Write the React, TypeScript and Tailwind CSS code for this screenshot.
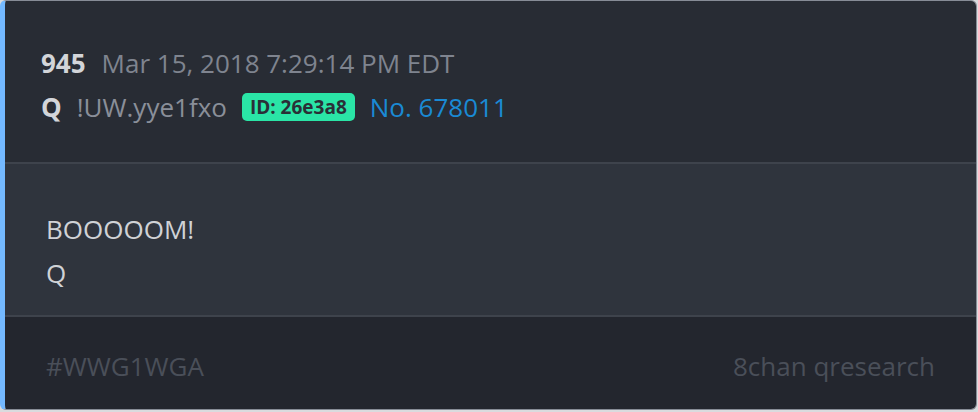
export default function App() {
  return (
    <div className="w-[978px] h-[412px] bg-[#d9dbde]" style={{ fontFamily: '"Open Sans", "Noto Sans", sans-serif' }}>
      <div className="w-[977px] h-[410px] flex flex-col rounded-[6px] overflow-hidden border border-[#878c96] border-l-[5px] border-l-[#74b9ff]">
        <div className="bg-[#282c34] pl-[36px] pt-[40px] pb-[33px] h-[161px]">
          <div className="flex items-center h-[44px] text-[26px]">
            <span className="font-bold text-[#d3d5d9]">945</span>
            <span className="ml-[16px] text-[#7f848f]">Mar 15, 2018 7:29:14 PM EDT</span>
          </div>
          <div className="flex items-center h-[44px] text-[26px]">
            <span className="font-bold text-[#d3d5d9]">Q</span>
            <span className="ml-[15px] text-[#8a8f99]">!UW.yye1fxo</span>
            <span className="ml-[15px] px-[8px] h-[28px] flex items-center rounded-[5px] bg-[#2ae5a6] text-[#2a2f37] font-bold text-[19px]">
              ID: 26e3a8
            </span>
            <span className="ml-[15px] text-[#1a8ad4]">No. 678011</span>
          </div>
        </div>
        <div className="h-[2px] bg-[#3e434c]" />
        <div className="bg-[#2f343d] pl-[41px] pt-[43px] pb-[20px] h-[151px] text-[26px] text-[#d0d2d6]">
          <div className="h-[44px] flex items-center">BOOOOOM!</div>
          <div className="h-[44px] flex items-center">Q</div>
        </div>
        <div className="h-[2px] bg-[#3e434c]" />
        <div className="flex-1 bg-[#23262e] pl-[41px] pr-[41px] pt-[6px] flex items-center justify-between text-[26px] text-[#4a4f59]">
          <span>#WWG1WGA</span>
          <span>8chan qresearch</span>
        </div>
      </div>
    </div>
  );
}
